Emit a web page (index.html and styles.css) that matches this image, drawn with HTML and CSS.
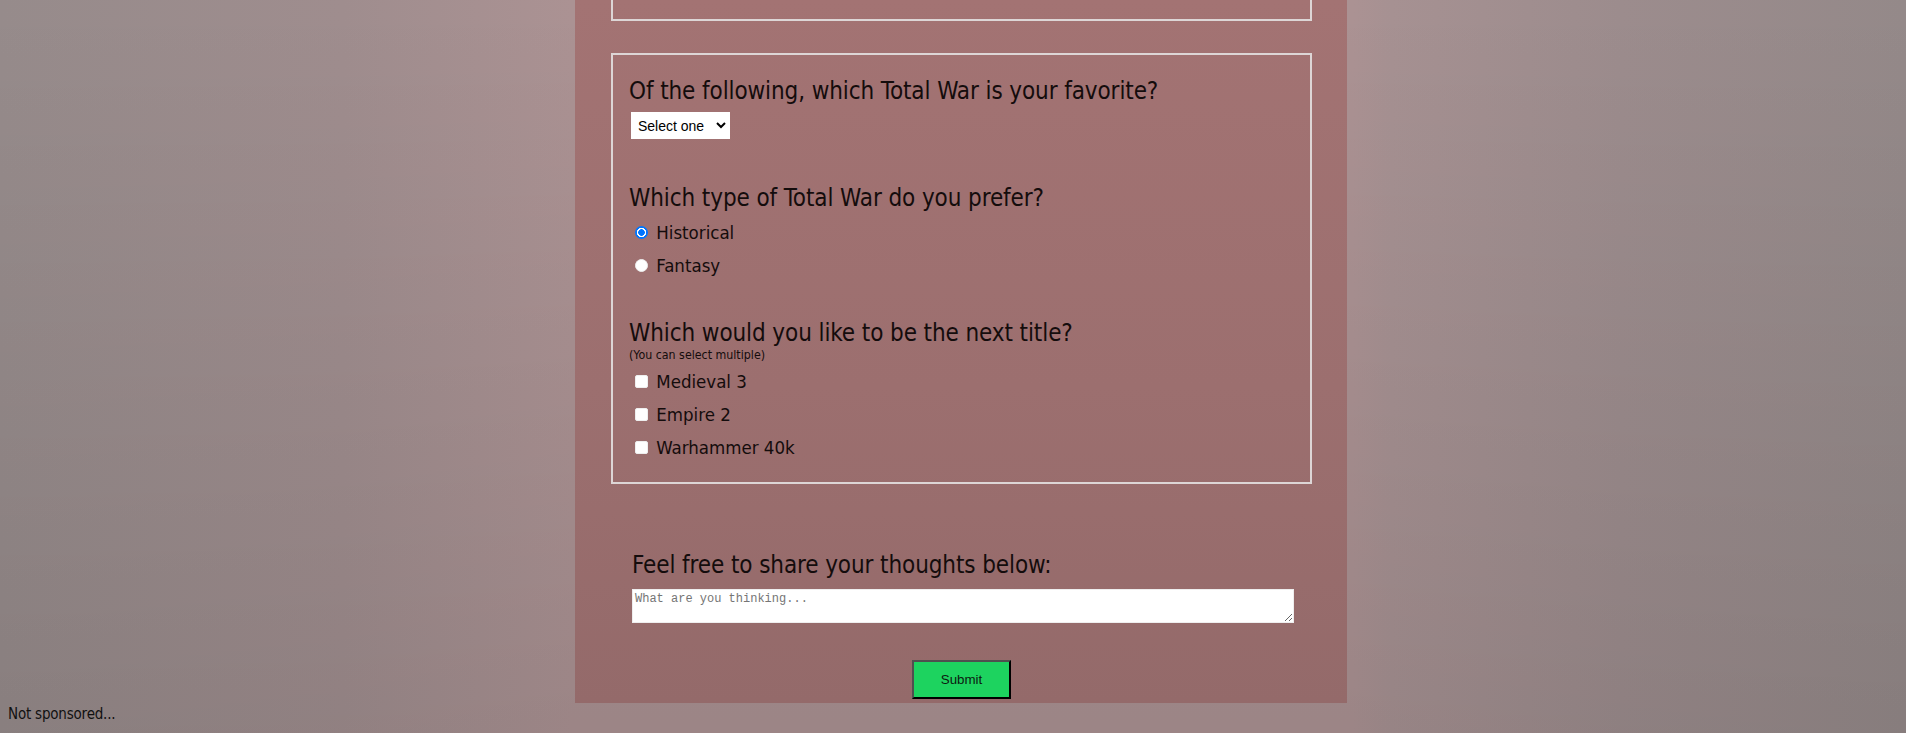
FILE: index.html
```html
<!DOCTYPE html>
<html lang="en">
<head>
<meta charset="utf-8">
<title>Total War Survey</title>
<link rel="stylesheet" href="styles.css">
</head>
<body>
<div class="page">
  <main class="panel">
    <div class="box box-prev"></div>
    <fieldset class="box box-main">
      <div class="q q-first">
        <h2 class="q-title">Of the following, which Total War is your favorite?</h2>
        <select class="pick">
          <option>Select one</option>
          <option>Shogun 2</option>
          <option>Rome</option>
          <option>Medieval 2</option>
          <option>Warhammer 2</option>
        </select>
      </div>
      <div class="q q-second">
        <h2 class="q-title">Which type of Total War do you prefer?</h2>
        <div class="opts">
          <label class="opt"><input class="radio" type="radio" name="kind" checked> Historical</label>
          <label class="opt"><input class="radio" type="radio" name="kind"> Fantasy</label>
        </div>
      </div>
      <div class="q q-third">
        <h2 class="q-title">Which would you like to be the next title?</h2>
        <p class="hint">(You can select multiple)</p>
        <div class="opts opts-check">
          <label class="opt"><input class="check" type="checkbox"> Medieval 3</label>
          <label class="opt"><input class="check" type="checkbox"> Empire 2</label>
          <label class="opt"><input class="check" type="checkbox"> Warhammer 40k</label>
        </div>
      </div>
    </fieldset>
    <section class="thoughts">
      <h2 class="q-title">Feel free to share your thoughts below:</h2>
      <textarea class="thoughts-input" placeholder="What are you thinking..."></textarea>
    </section>
    <div class="actions">
      <button class="submit" type="submit">Submit</button>
    </div>
  </main>
  <footer class="note">Not sponsored...</footer>
</div>
</body>
</html>
```
FILE: styles.css
```css
html, body {
  margin: 0;
  padding: 0;
  height: 733px;
  overflow: hidden;
}

body {
  font-family: "DejaVu Sans Condensed", "DejaVu Sans", sans-serif;
  font-stretch: condensed;
  color: #140c0c;
  background:
    linear-gradient(to bottom, rgba(0, 0, 0, 0) 0%, rgba(0, 0, 0, 0.09) 100%),
    linear-gradient(to right, #968b8b 0%, #9f8d8e 18%, #ab9293 30%, #ab9293 71%, #a69192 73%, #9c8c8d 85%, #948989 100%);
}

.page {
  padding: 0 8px;
}

.panel {
  margin-left: 30%;
  width: 772px;
  box-sizing: border-box;
  padding: 0 35px 4px 36px;
  background: linear-gradient(to bottom, #a37373 0%, #9c6f6f 55%, #946a6a 100%);
}

.box {
  margin: 0;
  border: 2px solid #ddd6d6;
  box-sizing: border-box;
  width: 701px;
}

.box-prev {
  border-top: none;
  height: 21px;
}

.box-main {
  margin-top: 32px;
  padding: 22px 16px 18px 16px;
  min-width: 0;
}

.q-title {
  margin: 0;
  font-size: 24px;
  font-weight: normal;
  line-height: 28px;
  letter-spacing: -0.1px;
}

.pick {
  display: block;
  margin: 7px 0 0 2px;
  width: 99px;
  height: 27px;
  box-sizing: border-box;
  border: 1px solid #ffffff;
  border-radius: 0;
  background: #ffffff;
  font-family: "Liberation Sans", Arial, sans-serif;
  font-stretch: normal;
  font-size: 14px;
  color: #000;
  padding: 0 0 0 2px;
}

.q-second {
  margin-top: 45px;
}

.q-third {
  margin-top: 37px;
}

.opts {
  margin-top: 4px;
}

.opts-check {
  margin-top: 4px;
}

.opt {
  display: block;
  font-size: 18.5px;
  line-height: 33px;
}

.radio,
.check {
  appearance: none;
  -webkit-appearance: none;
  width: 13px;
  height: 13px;
  box-sizing: border-box;
  margin: 0 3px 0 6px;
  vertical-align: baseline;
  background: #ffffff;
  border: 1px solid #eeeeee;
}

.radio {
  border-radius: 50%;
}

.radio:checked {
  border: none;
  background: radial-gradient(circle, #0075ff 0 3px, #ffffff 3.6px 4.4px, #0075ff 5px);
}

.check {
  border-radius: 2px;
}

.hint {
  margin: 2px 0 0 0;
  font-size: 12.3px;
  line-height: 12px;
}

.thoughts {
  margin-top: 67px;
  margin-left: 21px;
  width: 662px;
}

.thoughts-input {
  display: block;
  margin-top: 10px;
  width: 662px;
  height: 34px;
  box-sizing: border-box;
  border: 1px solid #eeeeee;
  background: #ffffff;
  padding: 2px 2px;
  font-family: "Liberation Mono", "Courier New", monospace;
  font-size: 12px;
  line-height: 14px;
  resize: both;
}

.thoughts-input::placeholder {
  color: #757575;
}

.actions {
  display: flex;
  justify-content: center;
  margin-top: 37px;
}

.submit {
  width: 99px;
  height: 39px;
  box-sizing: border-box;
  background: #1dd35f;
  border-style: solid;
  border-width: 2px;
  border-color: #4f4f4f #000 #000 #4f4f4f;
  font-family: "Liberation Sans", Arial, sans-serif;
  font-size: 13.33px;
  color: #0c1a10;
  padding: 0;
}

.note {
  padding-top: 2px;
  font-size: 15px;
  line-height: 18px;
  letter-spacing: -0.2px;
  color: #111;
}
```
